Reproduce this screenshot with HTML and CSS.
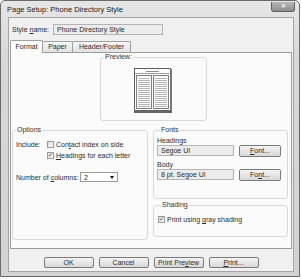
FILE: index.html
```html
<!DOCTYPE html>
<html lang="en">
<head>
    <meta charset="UTF-8">
    <title>Page Setup: Phone Directory Style</title>
    <link rel="stylesheet" href="styles.css">
</head>
<body>

<div class="window">
    <div class="titlebar">
        <span class="title">Page Setup: Phone Directory Style</span>
        <span class="close">&#x2715;</span>
    </div>

    <div class="client">
        <div class="style-row">
            <span class="style-label">Style <u>n</u>ame:</span>
            <div class="field style-field">Phone Directory Style</div>
        </div>

        <div class="tabs">
            <span class="tab tab-format active">Format</span>
            <span class="tab tab-paper">Paper</span>
            <span class="tab tab-header">Header/Footer</span>
        </div>

        <div class="panel">
            <fieldset class="group preview">
                <legend>Preview:</legend>
                <svg class="page" width="38" height="45" viewBox="0 0 38 45">
                    <defs>
                        <pattern id="rows" width="4" height="2" patternUnits="userSpaceOnUse">
                            <rect width="4" height="1" fill="#b3b3b3"/>
                        </pattern>
                    </defs>
                    <rect x="0.5" y="0.5" width="36" height="42" fill="#fff" stroke="#5e5e5e"/>
                    <rect x="0" y="42" width="38" height="3" fill="#666"/>
                    <rect x="36" y="1" width="2" height="42" fill="#777"/>
                    <line x1="12" y1="3.5" x2="25" y2="3.5" stroke="#8c8c8c"/>
                    <line x1="1" y1="5.5" x2="36" y2="5.5" stroke="#a0a0a0"/>
                    <rect x="2.5" y="7.5" width="15" height="33" fill="#fff" stroke="#808080"/>
                    <rect x="19.5" y="7.5" width="15" height="33" fill="#fff" stroke="#808080"/>
                    <rect x="4" y="9" width="12" height="31" fill="url(#rows)"/>
                    <rect x="21" y="9" width="12" height="31" fill="url(#rows)"/>
                </svg>
            </fieldset>

            <div class="lower">
                <fieldset class="group options">
                    <legend>Options</legend>
                    <div class="include-row">
                        <span class="include-label">Include:</span>
                        <div class="checks">
                            <div class="check-row">
                                <span class="checkbox"></span>
                                <span>Con<u>t</u>act index on side</span>
                            </div>
                            <div class="check-row">
                                <span class="checkbox checked">&#x2713;</span>
                                <span><u>H</u>eadings for each letter</span>
                            </div>
                        </div>
                    </div>
                    <div class="columns-row">
                        <span class="columns-label">Number of <u>c</u>olumns:</span>
                        <div class="select">
                            <span>2</span>
                            <span class="arrow"></span>
                        </div>
                    </div>
                </fieldset>

                <div class="right-col">
                    <fieldset class="group fonts">
                        <legend>Fonts</legend>
                        <div class="font-label">Headings</div>
                        <div class="font-row">
                            <div class="field font-field">Segoe UI</div>
                            <span class="button font-button"><u>F</u>ont...</span>
                        </div>
                        <div class="font-label">Body</div>
                        <div class="font-row">
                            <div class="field font-field">8 pt. Segoe UI</div>
                            <span class="button font-button">Fo<u>n</u>t...</span>
                        </div>
                    </fieldset>

                    <fieldset class="group shading">
                        <legend>Shading</legend>
                        <div class="check-row">
                            <span class="checkbox checked">&#x2713;</span>
                            <span>Print using <u>g</u>ray shading</span>
                        </div>
                    </fieldset>
                </div>
            </div>
        </div>

        <div class="buttons">
            <span class="button">OK</span>
            <span class="button">Cancel</span>
            <span class="button">Print Pre<u>v</u>iew</span>
            <span class="button"><u>P</u>rint...</span>
        </div>
    </div>
</div>

</body>
</html>
```

FILE: styles.css
```css
* {
    box-sizing: border-box;
}
body {
    margin: 0;
    background: #ffffff;
    font-family: "Liberation Sans", Arial, sans-serif;
    font-size: 7px;
    color: #2b2b2b;
}
u {
    text-decoration-thickness: 0.5px;
    text-underline-offset: 1px;
}
.window {
    width: 300px;
    height: 277px;
    border: 1px solid #6b6b6b;
    border-radius: 5px 5px 0 0;
    background: linear-gradient(to bottom, #e6e6e6, #d8d8d8 20%, #d2d2d2);
    padding: 0 5px 4px 7px;
    display: flex;
    flex-direction: column;
}
.titlebar {
    height: 16px;
    display: flex;
    justify-content: space-between;
    align-items: flex-start;
    margin-right: -4px;
}
.title {
    margin-left: -1px;
    padding-top: 4px;
    line-height: 9px;
    font-size: 7.5px;
    color: #1a1a1a;
}
.close {
    width: 24px;
    height: 10px;
    margin-top: 1px;
    margin-right: 3px;
    border: 1px solid #5f5f5f;
    border-top: none;
    border-radius: 0 0 3px 3px;
    background: linear-gradient(to bottom, #b8b8b8, #8e8e8e);
    color: #f4f4f4;
    font-size: 6px;
    font-weight: bold;
    line-height: 9px;
    text-align: center;
}
.client {
    flex: 1;
    background: #f0f0f0;
    border: 1px solid #a5a5a5;
    display: flex;
    flex-direction: column;
}
.style-row {
    margin-top: 6px;
    height: 11px;
    display: flex;
    align-items: center;
}
.style-label {
    width: 44px;
    padding-left: 3px;
}
.field {
    height: 11px;
    border: 1px solid #b4b4b4;
    background: #ececec;
    padding-left: 3px;
    line-height: 9px;
}
.style-field {
    width: 110px;
}
.tabs {
    margin-top: 5px;
    margin-left: 1px;
    height: 12px;
    display: flex;
    align-items: flex-end;
    position: relative;
    z-index: 1;
}
.tab {
    height: 11px;
    border: 1px solid #a0a0a0;
    border-bottom: none;
    border-radius: 2px 2px 0 0;
    background: linear-gradient(to bottom, #f6f6f6, #e2e2e2);
    text-align: center;
    line-height: 10px;
    margin-left: -1px;
}
.tab.active {
    height: 13px;
    margin-bottom: -1px;
    margin-left: 0;
    background: #fbfbfb;
    line-height: 11px;
}
.tab-format {
    width: 33px;
}
.tab-paper {
    width: 31px;
}
.tab-header {
    width: 59px;
}
.panel {
    height: 197px;
    margin: 0 1px;
    border: 1px solid #9c9c9c;
    background: #fbfbfb;
}
.group {
    margin: 0;
    padding: 0;
    border: 1px solid #d9d9d9;
    border-radius: 3px;
    min-width: 0;
}
.group legend {
    padding: 0 1px;
    margin-left: 3px;
    line-height: 8px;
    color: #333;
}
.preview {
    margin-left: 89px;
    width: 107px;
    height: 68px;
}
.page {
    display: block;
    margin-left: 33px;
    margin-top: 7px;
}
.lower {
    margin-top: 5px;
    margin-left: 1px;
    display: flex;
    gap: 5px;
}
.options {
    width: 136px;
    height: 114px;
}
.include-row {
    margin-top: 6px;
    display: flex;
}
.include-label {
    width: 34px;
    padding-left: 3px;
    line-height: 9px;
}
.checks {
    display: flex;
    flex-direction: column;
    gap: 2px;
}
.check-row {
    display: flex;
    align-items: center;
    gap: 2px;
    line-height: 9px;
}
.checkbox {
    width: 7px;
    height: 7px;
    border: 1px solid #9a9a9a;
    background: linear-gradient(to bottom right, #dcdcdc, #fafafa);
    font-size: 6px;
    line-height: 5px;
    text-align: center;
    color: #444;
}
.columns-row {
    margin-top: 12px;
    display: flex;
    align-items: center;
}
.columns-label {
    width: 67px;
    padding-left: 3px;
}
.select {
    width: 38px;
    height: 10px;
    border: 1px solid #9a9a9a;
    background: #fff;
    display: flex;
    align-items: center;
    justify-content: space-between;
    padding: 0 3px 0 3px;
}
.arrow {
    width: 0;
    height: 0;
    border-left: 2.5px solid transparent;
    border-right: 2.5px solid transparent;
    border-top: 3px solid #111;
}
.right-col {
    display: flex;
    flex-direction: column;
    gap: 2px;
}
.fonts {
    width: 135px;
    height: 73px;
    padding: 2px 0 0 3px;
}
.font-label {
    line-height: 9px;
}
.font-row {
    display: flex;
    gap: 5px;
    margin-bottom: 3px;
}
.font-field {
    width: 77px;
}
.button {
    width: 50px;
    height: 11px;
    border: 1px solid #7a7a7a;
    border-radius: 2px;
    background: linear-gradient(to bottom, #f4f4f4, #e6e6e6 50%, #d8d8d8);
    text-align: center;
    line-height: 9px;
}
.font-button {
    width: 42px;
    height: 12px;
    line-height: 10px;
}
.shading {
    width: 135px;
    height: 36px;
    padding: 6px 0 0 4px;
}
.buttons {
    flex: 1;
    display: flex;
    justify-content: center;
    gap: 5px;
    padding-top: 8px;
}
```
